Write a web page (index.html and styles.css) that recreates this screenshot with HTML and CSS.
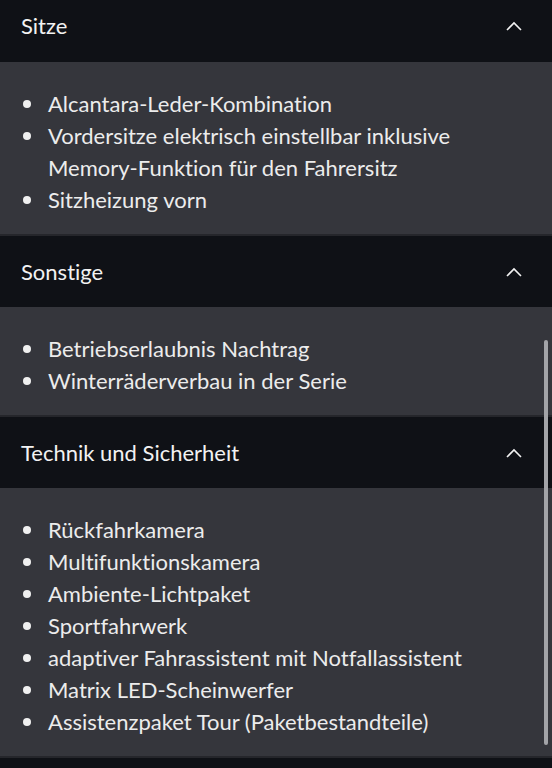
FILE: index.html
```html
<!DOCTYPE html>
<html lang="de">
<head>
<meta charset="utf-8">
<title>Ausstattung</title>
<link rel="stylesheet" href="styles.css">
</head>
<body>
<div class="viewport">
  <div class="accordion">
    <section class="section">
      <div class="header"><span class="title">Sitze</span><svg class="chev" width="16" height="10" viewBox="0 0 16 10"><path d="M1 9 L8 2 L15 9" fill="none" stroke="#f2f2f2" stroke-width="1.6"/></svg></div>
      <ul class="items">
        <li>Alcantara-Leder-Kombination</li>
        <li>Vordersitze elektrisch einstellbar inklusive Memory-Funktion für den Fahrersitz</li>
        <li>Sitzheizung vorn</li>
      </ul>
    </section>
    <section class="section">
      <div class="header"><span class="title">Sonstige</span><svg class="chev" width="16" height="10" viewBox="0 0 16 10"><path d="M1 9 L8 2 L15 9" fill="none" stroke="#f2f2f2" stroke-width="1.6"/></svg></div>
      <ul class="items">
        <li>Betriebserlaubnis Nachtrag</li>
        <li>Winterräderverbau in der Serie</li>
      </ul>
    </section>
    <section class="section">
      <div class="header"><span class="title">Technik und Sicherheit</span><svg class="chev" width="16" height="10" viewBox="0 0 16 10"><path d="M1 9 L8 2 L15 9" fill="none" stroke="#f2f2f2" stroke-width="1.6"/></svg></div>
      <ul class="items">
        <li>Rückfahrkamera</li>
        <li>Multifunktionskamera</li>
        <li>Ambiente-Lichtpaket</li>
        <li>Sportfahrwerk</li>
        <li>adaptiver Fahrassistent mit Notfallassistent</li>
        <li>Matrix LED-Scheinwerfer</li>
        <li>Assistenzpaket Tour (Paketbestandteile)</li>
      </ul>
    </section>
    <section class="section">
      <div class="header"></div>
    </section>
  </div>
  <div class="scrollbar"></div>
</div>
</body>
</html>
```

FILE: styles.css
```css
* { box-sizing: border-box; }
html, body {
  margin: 0;
  padding: 0;
  background: #0f1116;
  height: 100%;
  overflow: hidden;
}
body {
  font-family: Lato, "Noto Sans", sans-serif;
  font-variant-ligatures: none;
  color: #ececec;
}
.viewport {
  position: relative;
  height: 768px;
  overflow: hidden;
}
.accordion {
  margin-top: -11px;
  display: flex;
  flex-direction: column;
}
.section + .section .header {
  border-top: 2px solid #25262b;
}
.header {
  height: 73px;
  background: #0f1116;
  display: flex;
  align-items: center;
  justify-content: space-between;
  padding: 0 30px 0 21px;
}
.title {
  font-size: 22px;
  color: #f2f2f2;
}
.chev {
  display: block;
}
.items {
  list-style: none;
  margin: 0;
  padding: 26px 40px 18px 48px;
  background: #35363c;
}
.items li {
  position: relative;
  font-size: 22px;
  line-height: 32px;
  color: #ececec;
}
.items li::before {
  content: "";
  position: absolute;
  left: -25px;
  top: 12px;
  width: 8px;
  height: 8px;
  border-radius: 50%;
  background: #f0f0f0;
}
.scrollbar {
  position: absolute;
  right: 4px;
  top: 340px;
  width: 4px;
  height: 405px;
  border-radius: 2px;
  background: #a3a4a8;
}
```
